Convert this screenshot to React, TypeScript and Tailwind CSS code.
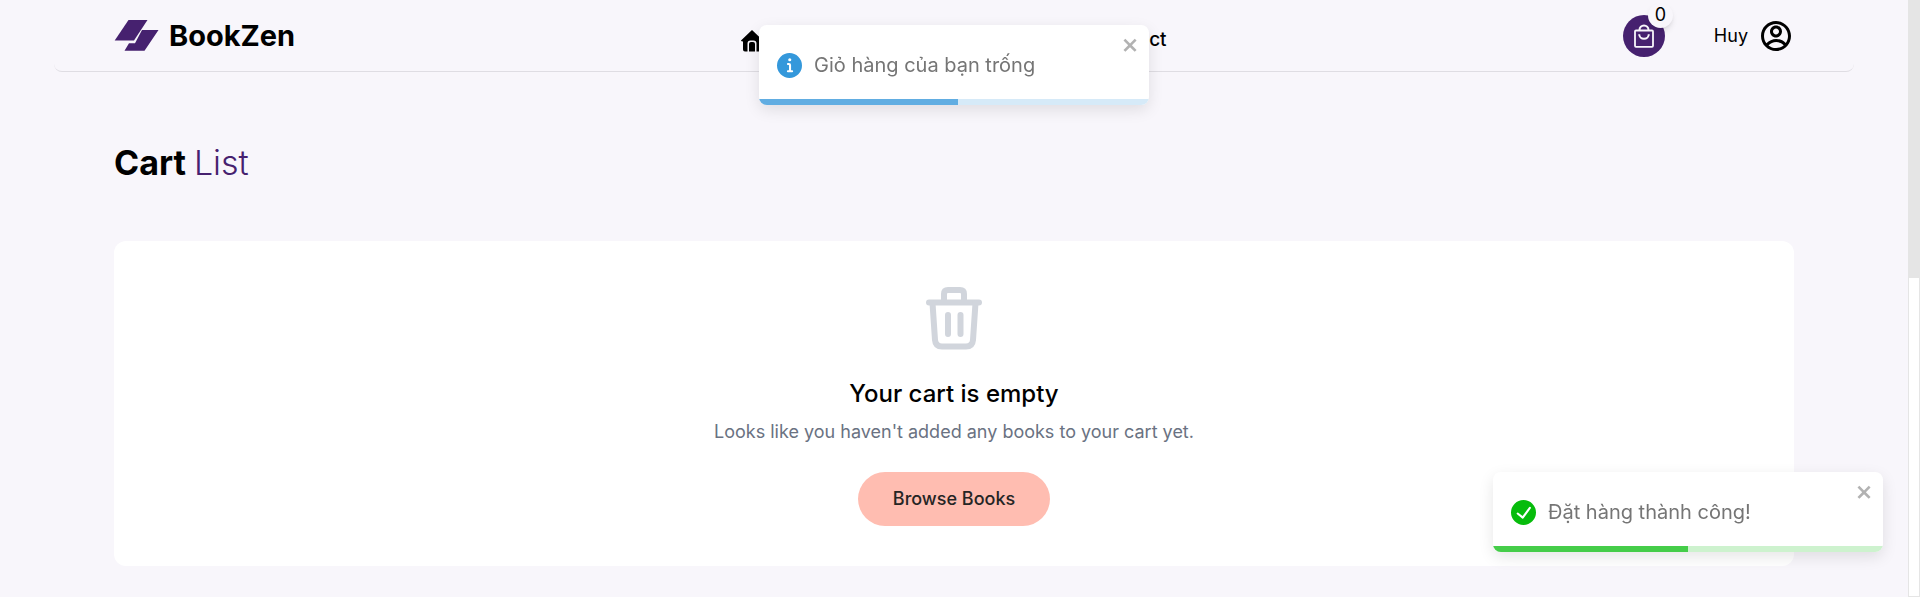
import React from "react";
import { RiAccountCircleLine } from "react-icons/ri";

function Logo() {
  return (
    <svg viewBox="0 0 45 33" className="h-[33px] w-[45px] fill-[#46216f]" aria-hidden="true">
      <path d="M14.5 1H33.5L20 21.5H.7z" />
      <path d="M28 11H44.5L30.5 31.8H10.5L15 24.2H21z" />
    </svg>
  );
}

function HomeIcon() {
  return (
    <svg viewBox="0 0 22 22" className="size-[22px]" aria-hidden="true">
      <path d="M11 0L0 10.5Q-.2 11.5 2 11.5V19.5Q2 21.5 4 21.5H6.5V13.5Q6.5 10.5 9.5 10.5H12.5Q15.5 10.5 15.5 13.5V21.5H18Q20 21.5 20 19.5V11.5Q22 11.5 22 10.5z" />
      <path d="M8 21.5V14Q8 12 10 12H12Q14 12 14 14V21.5z" />
    </svg>
  );
}

function BagIcon() {
  return (
    <svg viewBox="0 0 20 24" className="h-6 w-5" fill="none" stroke="currentColor" strokeWidth="1.8" strokeLinejoin="round" aria-hidden="true">
      <rect x="1" y="6.5" width="18" height="16.3" rx="1" />
      <path d="M5.5 6.5V6A4.5 4.5 0 0 1 14.5 6V6.5" strokeWidth="2" />
      <path d="M5.2 10.3A4.8 4.5 0 0 0 14.8 10.3" strokeWidth="2" />
    </svg>
  );
}

function TrashIcon() {
  return (
    <svg viewBox="0 0 58 64" className="h-16 w-[58px] text-gray-300" fill="none" stroke="currentColor" strokeWidth="6" strokeLinecap="round" strokeLinejoin="round" aria-hidden="true">
      <path d="M4 16.5H54M19 15V8Q19 4 23 4H35Q39 4 39 8V15" />
      <path d="M7.5 17L10 54Q10.5 60.5 17 60.5H41Q47.5 60.5 48 54L50.5 17" />
      <path d="M23 29V48M35.5 29V48" />
    </svg>
  );
}

function InfoIcon() {
  return (
    <svg viewBox="0 0 24 24" className="size-[25px] fill-[#3498db]" aria-hidden="true">
      <path d="M12 0a12 12 0 1012 12A12.013 12.013 0 0012 0zm.25 5a1.5 1.5 0 11-1.5 1.5 1.5 1.5 0 011.5-1.5zm2.25 13.5h-4a1 1 0 010-2h.75a.25.25 0 00.25-.25v-4.5a.25.25 0 00-.25-.25h-.75a1 1 0 010-2h1a2 2 0 012 2v4.75a.25.25 0 00.25.25h.75a1 1 0 110 2z" />
    </svg>
  );
}

function SuccessIcon() {
  return (
    <svg viewBox="0 0 24 24" className="size-[25px] fill-[#07bc0c]" aria-hidden="true">
      <path d="M12 0a12 12 0 1012 12A12.014 12.014 0 0012 0zm6.927 8.2l-6.845 9.289a1.011 1.011 0 01-1.43.188l-4.888-3.908a1 1 0 111.25-1.562l4.076 3.261 6.227-8.451a1 1 0 111.61 1.183z" />
    </svg>
  );
}

type ToastProps = {
  icon: React.ReactNode;
  text: string;
  track: string;
  bar: string;
  progress: number;
  place: string;
};

function Toast({ icon, text, track, bar, progress, place }: ToastProps) {
  return (
    <div role="alert" className={`fixed z-20 w-[390px] overflow-hidden rounded-lg bg-white shadow-[0_5px_15px_rgba(0,0,0,0.1)] ${place}`}>
      <div className="flex h-20 items-center gap-3 px-[18px] text-xl text-[#757575]">
        {icon}
        <span>{text}</span>
      </div>
      <button type="button" aria-label="close" className="absolute top-2.5 right-[9px] text-[#b2b2b2]">
        <svg viewBox="0 0 14 16" className="h-5 w-[18px] fill-current" aria-hidden="true">
          <path fillRule="evenodd" d="M7.71 8.23l3.75 3.75-1.48 1.48-3.75-3.75-3.75 3.75L1 11.98l3.75-3.75L1 4.48 2.48 3l3.75 3.75L9.98 3l1.48 1.48-3.75 3.75z" />
        </svg>
      </button>
      <div className={`absolute inset-x-0 bottom-0 h-1.5 ${track}`}>
        <div className={`h-full ${bar}`} style={{ width: `${progress}%` }} />
      </div>
    </div>
  );
}

export default function App() {
  return (
    <div className="flex min-h-screen bg-[#f8f6fb] font-['Inter','Liberation_Sans',sans-serif] text-black">
      <div className="flex-1 px-[54px]">
        <header className="grid h-[72px] grid-cols-[1fr_auto_1fr] items-center rounded-lg border-b border-[#dfdde3] px-15">
          <a href="#home" className="flex items-center gap-2.5 text-[29px] font-bold">
            <Logo />
            <span>BookZen</span>
          </a>
          <nav className="flex items-center gap-[53px] pt-2.5 text-[19px] font-medium">
            <a href="#home" className="flex items-center gap-2"><HomeIcon />Home</a>
            <a href="#books">Books</a>
            <a href="#about">About</a>
            <a href="#contact">Contact</a>
          </nav>
          <div className="flex items-center justify-end gap-[49px]">
            <a href="#cart" aria-label="Cart" className="relative flex size-[42px] items-center justify-center rounded-full bg-[#46216f] text-[#f8f6fb]">
              <BagIcon />
              <span className="absolute -top-3 -right-2 flex size-[25px] items-center justify-center rounded-full bg-[#f8f6fb] text-lg text-black shadow-md">0</span>
            </a>
            <button type="button" className="flex items-center gap-2.5 text-lg">
              Huy
              <RiAccountCircleLine className="size-9" />
            </button>
          </div>
        </header>
        <main className="px-15 pt-[71px]">
          <h1 className="text-[34px] leading-10 font-bold">
            Cart <span className="font-light text-[#46216f]">List</span>
          </h1>
          <section className="mt-[58px] flex flex-col items-center rounded-xl bg-white pt-[45px] pb-10">
            <TrashIcon />
            <h2 className="mt-7 text-2xl font-medium">Your cart is empty</h2>
            <p className="mt-2 text-lg text-gray-500">Looks like you haven't added any books to your cart yet.</p>
            <a href="#books" className="mt-[26px] rounded-full bg-[#ffbdb1] px-[35px] py-[13px] text-lg font-medium text-[#252525]">Browse Books</a>
          </section>
        </main>
      </div>
      <div className="h-screen w-3 border border-[#e5e5e5] bg-white" aria-hidden="true">
        <div className="h-[277px] bg-[#e5e5e5]" />
      </div>
      <Toast icon={<InfoIcon />} text="Giỏ hàng của bạn trống" track="bg-[#d6eaf8]" bar="bg-[#61ade2]" progress={51} place="top-[25px] left-[759px]" />
      <Toast icon={<SuccessIcon />} text="Đặt hàng thành công!" track="bg-[#cdf2ce]" bar="bg-[#45cd49]" progress={50} place="right-[37px] bottom-[45px]" />
    </div>
  );
}
